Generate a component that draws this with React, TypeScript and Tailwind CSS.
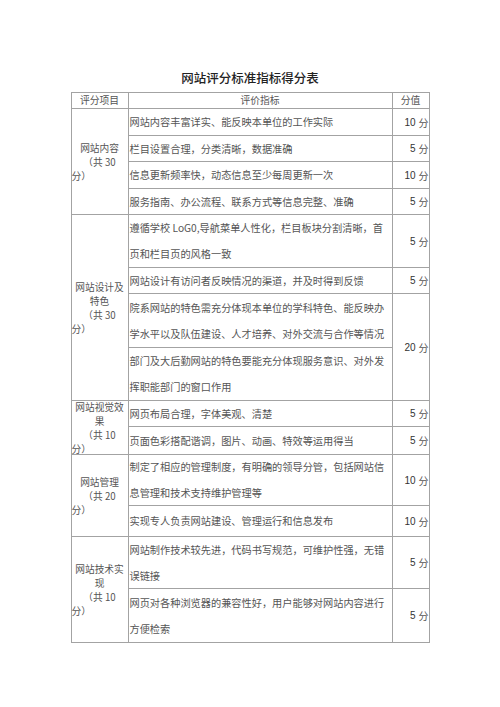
const body = {
  fontFamily: '"Noto Sans CJK SC", "Noto Sans", sans-serif',
};
const score = {
  fontFamily: '"Liberation Sans", "Noto Sans CJK SC", sans-serif',
};

function Cat({ lines, last, span }: { lines: string[]; last: string; span: string }) {
  return (
    <div className={`${span} flex flex-col justify-center bg-white text-[9.7px] leading-[14px] text-[#555]`}>
      {lines.map((l) => (
        <span key={l} className="block whitespace-nowrap text-center">
          {l}
        </span>
      ))}
      <span className="block text-left">{last}</span>
    </div>
  );
}

function Item({ lines }: { lines: string[] }) {
  return (
    <div className="flex flex-col justify-center bg-white pl-px text-[10.2px] leading-[26px] text-[#555]">
      {lines.map((l) => (
        <span key={l} className="block whitespace-nowrap">
          {l}
        </span>
      ))}
    </div>
  );
}

function Score({ v, span = "" }: { v: string; span?: string }) {
  return (
    <div
      className={`${span} flex items-center justify-end bg-white text-[10px] text-[#333]`}
      style={score}
    >
      {v} <span className="ml-[3px] text-[#555]" style={body}>分</span>
    </div>
  );
}

export default function App() {
  return (
    <div className="min-h-[707px] w-[500px] bg-white pt-[70px]" style={body}>
      <h1 className="text-center text-[12.5px] font-medium leading-[16px] text-[#222]">
        网站评分标准指标得分表
      </h1>

      <div className="mx-auto mt-[6px] grid w-[359px] grid-cols-[56px_263px_36px] grid-rows-[15px_26px_25px_26px_25px_52px_25px_53px_52px_25px_27px_50px_30px_51px_53px] gap-px bg-[#a3a3a3] p-px">
        {/* header */}
        <div className="flex items-center justify-center bg-white text-[9.8px] text-[#555]">评分项目</div>
        <div className="flex items-center justify-center bg-white text-[9.8px] text-[#555]">评价指标</div>
        <div className="flex items-center justify-center bg-white text-[9.8px] text-[#555]">分值</div>

        {/* 网站内容 */}
        <Cat span="row-span-4" lines={["网站内容", "（共 30"]} last="分）" />
        <Item lines={["网站内容丰富详实、能反映本单位的工作实际"]} />
        <Score v="10" />
        <Item lines={["栏目设置合理，分类清晰，数据准确"]} />
        <Score v="5" />
        <Item lines={["信息更新频率快，动态信息至少每周更新一次"]} />
        <Score v="10" />
        <Item lines={["服务指南、办公流程、联系方式等信息完整、准确"]} />
        <Score v="5" />

        {/* 网站设计及特色 */}
        <Cat span="row-span-4" lines={["网站设计及", "特色", "（共 30"]} last="分）" />
        <Item lines={["遵循学校 LoG0,导航菜单人性化，栏目板块分割清晰，首", "页和栏目页的风格一致"]} />
        <Score v="5" />
        <Item lines={["网站设计有访问者反映情况的渠道，并及时得到反馈"]} />
        <Score v="5" />
        <Item lines={["院系网站的特色需充分体现本单位的学科特色、能反映办", "学水平以及队伍建设、人才培养、对外交流与合作等情况"]} />
        <Score v="20" span="row-span-2" />
        <Item lines={["部门及大后勤网站的特色要能充分体现服务意识、对外发", "挥职能部门的窗口作用"]} />

        {/* 网站视觉效果 */}
        <Cat span="row-span-2" lines={["网站视觉效", "果", "（共 10"]} last="分）" />
        <Item lines={["网页布局合理，字体美观、清楚"]} />
        <Score v="5" />
        <Item lines={["页面色彩搭配谐调，图片、动画、特效等运用得当"]} />
        <Score v="5" />

        {/* 网站管理 */}
        <Cat span="row-span-2" lines={["网站管理", "（共 20"]} last="分）" />
        <Item lines={["制定了相应的管理制度，有明确的领导分管，包括网站信", "息管理和技术支持维护管理等"]} />
        <Score v="10" />
        <Item lines={["实现专人负责网站建设、管理运行和信息发布"]} />
        <Score v="10" />

        {/* 网站技术实现 */}
        <Cat span="row-span-2" lines={["网站技术实", "现", "（共 10"]} last="分）" />
        <Item lines={["网站制作技术较先进，代码书写规范，可维护性强，无错", "误链接"]} />
        <Score v="5" />
        <Item lines={["网页对各种浏览器的兼容性好，用户能够对网站内容进行", "方便检索"]} />
        <Score v="5" />
      </div>
    </div>
  );
}
